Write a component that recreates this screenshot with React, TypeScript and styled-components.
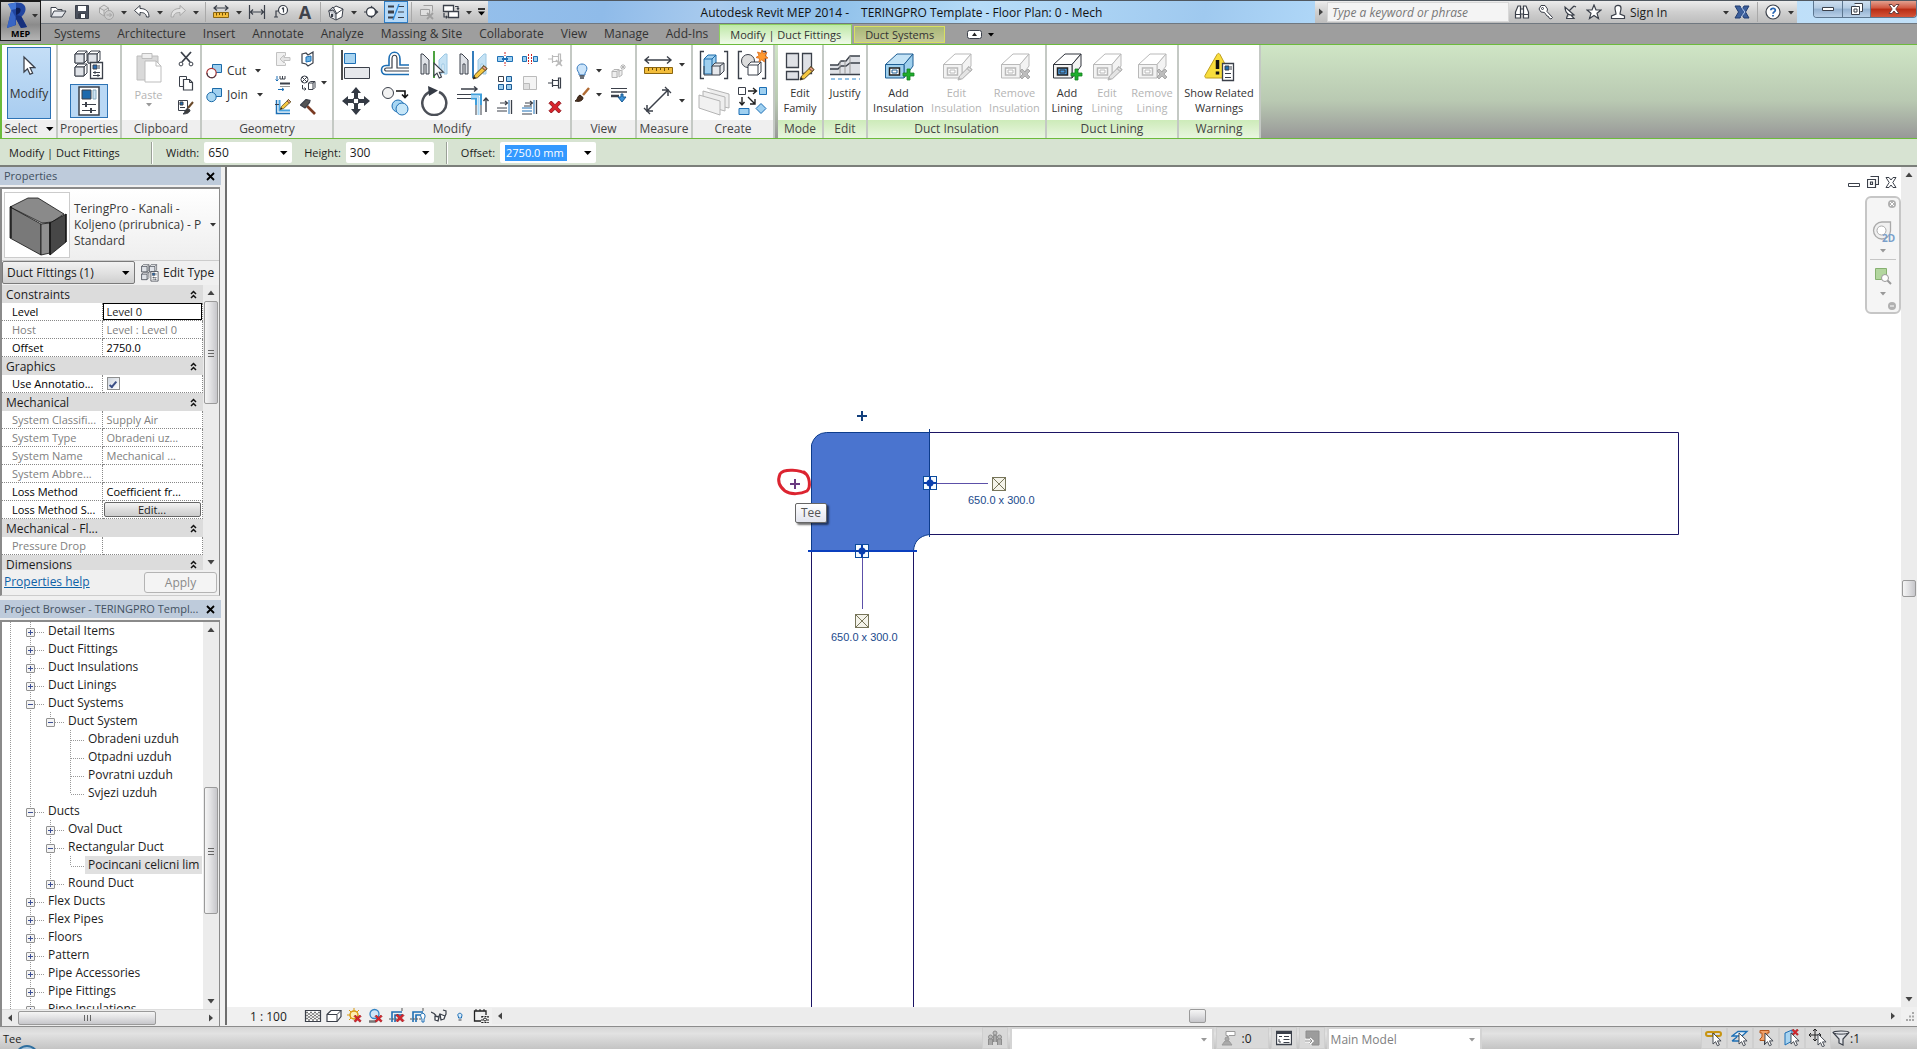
import React from "react";
import styled, { createGlobalStyle, css } from "styled-components";

const INK = "#3b404a";
const BLUE = "#1d6fb5";
const SKY = "#9fd0f0";
const MUTE = "#b9b9b9";

const Global = createGlobalStyle`
  *, *::before, *::after { box-sizing: border-box; }
  body { margin: 0; overflow: hidden; background: #f0f0f0; }
  body, button, input, select { font-family: "Open Sans", "Noto Sans", sans-serif; font-size: 12px; color: #1c1c1c; }
  button, select, input { margin: 0; padding: 0; border: 0; background: none; border-radius: 0; }
  svg { display: block; flex: none; }
`;

/* ---------- icons ---------- */

type IconProps = { w?: number; h?: number; children: React.ReactNode; s?: string };
const Icon = ({ w = 16, h = 16, s = INK, children }: IconProps) => (
  <svg width={w} height={h} viewBox={`0 0 ${w} ${h}`} fill="none" stroke={s} aria-hidden="true">
    {children}
  </svg>
);

const Caret = ({ c = "#333" }: { c?: string }) => (
  <Icon w={8} h={5}><path d="M1 1h6L4 4.500z" fill={c} stroke="none" /></Icon>
);
const BigCaret = () => (
  <Icon w={9} h={6}><path d="M1 1h7.500L4.700 5z" fill="#000" stroke="none" /></Icon>
);
const PointerShape = ({ x, y, k = 1 }: { x: number; y: number; k?: number }) => (
  <path transform={`translate(${x} ${y}) scale(${k})`} d="M0 0v13l3-2.800 2.200 4.800 2.300-1-2.200-4.700H9.500z" fill="#fff" stroke={INK} strokeWidth={1.100} />
);
const PencilShape = ({ x, y, muted }: { x: number; y: number; muted?: boolean }) => (
  <g transform={`translate(${x} ${y})`} stroke={muted ? "#aaa" : "#5a4a20"} strokeWidth="1">
    <path d="M0 14l1.500-4L11 .700l3 3L4.500 12.700z" fill={muted ? "#e4e4e4" : "#f5c63f"} />
    <path d="M9 2.500l3 3L14 3.700l-3-3z" fill={muted ? "#ddd" : "#e59a86"} />
    <path d="M0 14l1-3 2 2z" fill={muted ? "#bbb" : "#222"} stroke="none" />
  </g>
);
const PlusShape = ({ x, y }: { x: number; y: number }) => (
  <path transform={`translate(${x} ${y})`} d="M4 0h3v4h4v3H7v4H4V7H0V4h4z" fill="#1fae2c" stroke="#158020" strokeWidth=".8" />
);
const CrossShape = ({ x, y }: { x: number; y: number }) => (
  <path transform={`translate(${x} ${y})`} d="M2 0l3 3 3-3 2 2-3 3 3 3-2 2-3-3-3 3-2-2 3-3-3-3z" fill="#bdbdbd" stroke="#9d9d9d" strokeWidth=".8" />
);
const RedCross = ({ x, y, k = 1 }: { x: number; y: number; k?: number }) => (
  <path transform={`translate(${x} ${y}) scale(${k})`} d="M1.500 0L4 2.500 6.500 0 8 1.500 5.500 4 8 6.500 6.500 8 4 5.500 1.500 8 0 6.500 2.500 4 0 1.500z" fill="#d8242c" stroke="#8c1016" strokeWidth=".6" />
);

const OpenIcon = () => (
  <Icon w={18} h={16}><path d="M2 13V3.500h5l1.500 2H13V7" fill="#fff" /><path d="M2 13L5 7h12l-4 6z" fill="#e4e6ea" /></Icon>
);
const SaveIcon = () => (
  <Icon><path d="M1.500 1.500h13v13h-13z" fill="#4a505c" /><path d="M4 2h8v5H4z" fill="#fff" stroke="none" /><path d="M4.500 9.500h7v5h-7z" fill="#fff" /><path d="M6 10v4" strokeWidth="2" /></Icon>
);
const SyncIcon = () => (
  <Icon s="#a4a4a4"><path d="M1.500 4L6 1l4.500 3v5L6 12 1.500 9zM1.500 4L6 6.500 10.500 4M6 6.500V12" fill="#ddd" /><circle cx="11" cy="11" r="4.500" fill="#ccc" /><path d="M8.500 11h5M11.500 9l2 2-2 2" /></Icon>
);
const UndoIcon = ({ muted }: { muted?: boolean }) => (
  <Icon w={18} s={muted ? "#a9a9a9" : INK}>
    <path transform={muted ? "matrix(-1 0 0 1 18 0)" : undefined} d="M1.500 6.500L7 1.500v3c6 0 9 3 9 8.500h-2.500C13 9.500 11 8.500 7 8.500v3z" fill={muted ? "#e2e2e2" : "#fff"} />
  </Icon>
);
const RulerIcon = ({ w = 16 }: { w?: number }) => (
  <Icon w={w} h={w > 20 ? 20 : 14}>
    {w > 20 ? (
      <><path d="M2 5h26M6 1.500L2 5l4 3.500M24 1.500L28 5l-4 3.500" strokeWidth="1.400" /><path d="M1.500 12.500h28v6h-28z" fill="#f3bd3b" stroke="#8a6510" /><path d="M5.500 13v3M9.500 13v2M13.500 13v3M17.500 13v2M21.500 13v3M25.500 13v2" stroke="#6b4d08" /></>
    ) : (
      <><path d="M1 3h14M4 .500L1 3l3 2.500M12 .500L15 3l-3 2.500" strokeWidth="1.200" /><path d="M.500 7.500h15v5H.500z" fill="#f3bd3b" stroke="#8a6510" /><path d="M3.500 8v2.500M6.500 8v2M9.500 8v2.500M12.500 8v2" stroke="#6b4d08" /></>
    )}
  </Icon>
);
const DimIcon = () => (
  <Icon w={18} h={14}><path d="M1.500 0v14M16.500 0v14M2 7h14M5 4.500L2.500 7 5 9.500M13 4.500L15.500 7 13 9.500" strokeWidth="1.200" /></Icon>
);
const TagIcon = () => (
  <Icon w={18}><circle cx="11" cy="6" r="4.500" fill="#fff" strokeWidth="1.200" /><path d="M6.500 7H4v6M2 13h4M11.500 3.500v5M10 5l1.500-1.500" strokeWidth="1.200" /></Icon>
);
const HouseIcon = () => (
  <Icon w={18} h={18}><path d="M2 8l7-5 7 3-1 8-6 3-6-3z" fill="#fff" /><path d="M2 8l4-1 3 4v6M9 11l7-5M1 8.500L6 4l4 7" fill="#c9ccd2" /><path d="M5 11v3" strokeWidth="2" /></Icon>
);
const SectionIcon = () => (
  <Icon><path d="M7 1.500l7.500 6.500L7 14.500z" fill={INK} stroke="none" /><circle cx="7" cy="8" r="4.500" fill="#fff" strokeWidth="1.300" /><path d="M0 8h2" /></Icon>
);
const ThinLinesIcon = () => (
  <Icon w={18} h={16}><path d="M1 2.500h6M1 13.500h6" strokeWidth="2" /><path d="M1 8h6" strokeWidth="3" /><path d="M11 2.500h6M11 8h6M11 13.500h6" /><path d="M12 0L6 16" stroke="#2a8be0" strokeWidth="1.300" /></Icon>
);
const CloseHiddenIcon = () => (
  <Icon s="#9f9f9f"><path d="M4.500 1.500h9v6M1.500 5.500h9v6h-9z" fill="#e0e0e0" /><path d="M8 9l6 6M14 9l-6 6" strokeWidth="1.800" /></Icon>
);
const SwitchIcon = () => (
  <Icon w={18}><path d="M1.500 1.500h10v6h-10zM6.500 7.500h10v6h-10z" fill="#fff" strokeWidth="1.300" /><path d="M13 2.500h3v3M15 4l1 1.500L17 4M2 9v4h3M4 12l1.200 1L4 14.500" strokeWidth="1.200" /></Icon>
);
const CustomizeIcon = () => (
  <Icon w={9} h={8}><path d="M1 1h7" stroke="#000" strokeWidth="1.500" /><path d="M1 3.500h7L4.500 7.500z" fill="#000" stroke="none" /></Icon>
);
const BinocularsIcon = () => (
  <Icon><path d="M1.500 14V8L4 2h2.500v12zM14.500 14V8L12 2H9.500v12zM6.500 5h3v5h-3zM1.500 10.500h5M9.500 10.500h5" fill="#fff" strokeWidth="1.200" /></Icon>
);
const KeyIcon = () => (
  <Icon><path d="M3 1.500h4L9.500 5 9 7.500l5.500 6-1.500 1.500-2-1-.500-1.500L9 12l-2.500-3.500L3 8 1 5z" fill="#fff" /><circle cx="4.500" cy="4.500" r="1" /></Icon>
);
const DishIcon = () => (
  <Icon><path d="M3 3c0 6 4 9 9 8zM7 7l5-5M12 2l2 1M4 14.500h8L9 11M6 10l-1.500 4" fill="#fff" strokeWidth="1.200" /></Icon>
);
const StarIcon = () => (
  <Icon><path d="M8 1l2 5h5l-4 3.300 1.500 5.200L8 11.500l-4.500 3L5 9.300 1 6h5z" fill="#fff" strokeWidth="1.200" /></Icon>
);
const PersonIcon = () => (
  <Icon><path d="M5 4c0-3.500 6-3.500 6 0 0 3-1 4-1 6l4.500 2v2.500h-13V12L6 10c0-2-1-3-1-6z" fill="#fff" strokeWidth="1.200" /></Icon>
);
const ExchangeIcon = () => (
  <Icon><path d="M1 2h5l2 3.500L10 2h5l-3.500 6 3.500 6h-5l-2-3.500L6 14H1l3.500-6z" fill="#3c5f9c" stroke="#203c70" /><path d="M7 3l4 5-4 5" stroke="#b5cdf0" /></Icon>
);
const HelpIcon = () => (
  <Icon><circle cx="8" cy="8" r="7" fill="#fff" strokeWidth="1.200" /><path d="M5.800 6.200C6 3.600 10.500 3.800 10.300 6.300 10.200 7.900 8 8 8 9.800M8 11v1.600" stroke="#2866b4" strokeWidth="1.800" /></Icon>
);
const LogoIcon = () => (
  <Icon w={24} h={27}>
    <path d="M3 2l8-1.500c7-.500 10 3 9.500 7.500-.500 3-2 5-4 6.500L22 25l-6 1-5-9v6l-9 3L6.500 7z" fill="#2145a0" stroke="none" />
    <path d="M3 2l8-1.500V7l-5 1z" fill="#4275d6" stroke="none" /><path d="M11 6c4-1 5 1 4.500 3S13 12.500 11 13z" fill="#0d1d55" stroke="none" />
    <path d="M11 13l5 1 6 11-6 1-5-9z" fill="#16307c" stroke="none" /><path d="M2 26L6.500 8l4 7v8z" fill="#3865c4" stroke="none" />
  </Icon>
);

/* ribbon, large */
const CursorIcon = () => (<Icon w={14} h={20}><PointerShape x={2} y={2} k={1.150} /></Icon>);
const CubesGroup = ({ k = 1 }: { k?: number }) => (
  <Icon w={30 * k} h={30 * k}>
    <g transform={`scale(${k})`}>
      {[[1, 1], [14, 1], [1, 14]].map(([x, y]) => (
        <g key={`${x}-${y}`} transform={`translate(${x} ${y})`}><path d="M0 3l3-3h9v9l-3 3H0z" fill="#fff" /><path d="M0 3h9v9M9 3l3-3" /><path d="M0 3h9v9H0z" fill="#e0e3e8" /></g>
      ))}
      <path d="M16.500 12.500h12v16h-12z" fill="#fff" strokeWidth="1.300" /><path d="M19 15h4v4h-4z" fill="#2a6fb8" /><path d="M25 15v4M19 22.500h7M19 25.500h7" /><path d="M21 21v3M24 24v3" />
    </g>
  </Icon>
);
const SheetIcon = () => (
  <Icon w={22} h={30}><path d="M1 1h20v28H1z" fill="#fff" strokeWidth="1.500" /><path d="M4 4h9v9H4z" fill="#1d6aad" /><path d="M15 4h3v9h-3z" fill="#cfe4f5" stroke="#8ab" /><path d="M4 18.500h14M4 24.500h14" /><path d="M8 16v5M13 22v5" strokeWidth="2" /></Icon>
);
const PasteIcon = () => (
  <Icon w={28} h={32} s="#bdbdbd"><path d="M2 4h21v24H2z" fill="#d9d9d9" /><path d="M7 1.500h10v5H7z" fill="#eee" /><path d="M10 9h11l5 5v16H10z" fill="#fff" /><path d="M21 9v5h5" /></Icon>
);
const ScissorsIcon = () => (
  <Icon><path d="M3 1l9 10M13 1L4 11" strokeWidth="1.800" /><circle cx="3" cy="13" r="1.900" /><circle cx="13" cy="13" r="1.900" /></Icon>
);
const CopyIcon = () => (
  <Icon><path d="M1.500 1.500h7v10h-7z" fill="#fff" /><path d="M5.500 4.500h6l3 3v7.500h-9z" fill="#fff" strokeWidth="1.200" /><path d="M11.500 4.500v3h3" /></Icon>
);
const MatchIcon = () => (
  <Icon><path d="M.500 1.500h9v10h-9z" fill="#fff" /><path d="M2 3h3v3H2z" fill={BLUE} /><path d="M2 8.500h5" /><path d="M15 3l-5 6" stroke="#6a4a2a" strokeWidth="2" /><path d="M5 15c2-1 2-5 4.500-5.500L12 11c0 3-4 4-7 4z" fill="#3c3c3c" /></Icon>
);
const CutIcon = () => (
  <Icon><path d="M6.500 1.500h9v8h-9z" fill={SKY} stroke="#1b6aa8" /><circle cx="5.500" cy="10" r="4.700" fill="#fff" stroke="#a33" strokeWidth="1.200" /><path d="M1 10a4.700 4.700 0 009 2" stroke={INK} /></Icon>
);
const JoinIcon = () => (
  <Icon><path d="M6.500 1.500h9v8h-9z" fill={SKY} stroke="#1b6aa8" /><circle cx="5.500" cy="10" r="4.700" fill="#a9d7f2" stroke="#1b6aa8" /></Icon>
);
const CopeIcon = () => (<Icon s="#c2c2c2"><path d="M1.500 1.500h9v3l-4 4 4 4v2h-9z" fill="#f0f0f0" /><path d="M5 8l4-4v2.500h6v3H9V12z" fill="#e4e4e4" /></Icon>);
const WallJoinIcon = () => (
  <Icon><path d="M2 3l4-1 2 2 5-3v11l-5 3-2-2-4-1z" fill="#fff" strokeWidth="1.200" /><path d="M6 6l5-1v5l-5 1z" fill="#6bb5e6" stroke={BLUE} /></Icon>
);
const SplitFaceIcon = () => (
  <Icon><path d="M2 1v5M.500 4.500L2 6l1.500-1.500" stroke={BLUE} /><path d="M5 1v3h2.500V1M7.500 4H10V1" /><path d="M5 8.500h10" strokeWidth="2" /><path d="M5 11.500h10" stroke="#999" /><path d="M3 14.500h6M7 13l2 1.500L7 16" stroke={BLUE} /></Icon>
);
const DemolishPaintIcon = () => (
  <Icon><circle cx="4.500" cy="4.500" r="3.500" fill="#fff" /><path d="M2 2l5 5M7 2L2 7M2.500 10v4h3M4.500 12.500L6 14l-1.500 1.500" /><path d="M8.500 8l2-1.500H15v6L13 14.500H8.500z" fill="#fff" /><path d="M8.500 8H13v6M13 8l2-1.500" /></Icon>
);
const BeamIcon = () => (
  <Icon><path d="M1.500 1v13.500H15" stroke={BLUE} strokeWidth="1.500" /><path d="M4.500 1v10.500H15" stroke="#4aa3e0" strokeWidth="2" /><path d="M0 5.500h4" /><g transform="scale(.75)"><PencilShape x={7} y={0} /></g></Icon>
);
const HammerIcon = () => (
  <Icon><path d="M7 7l8 8" stroke="#7a3a22" strokeWidth="2.600" /><path d="M.500 6L6 .500l4 1-.500 2L5 9z" fill="#555" strokeWidth="1.200" /></Icon>
);
const AlignIcon = () => (
  <Icon w={30} h={30}><path d="M1 0v30" stroke="#111" strokeWidth="1.500" /><path d="M3.500 3.500h11v10h-11z" fill="#a9d4f0" stroke={BLUE} /><path d="M3.500 17.500h25v11h-25z" fill="#e6e8ec" /></Icon>
);
const OffsetIcon = () => (
  <Icon w={30} h={30}><path d="M29 24.500H6c-6 0-6-9 0-9h3V9c0-9 11-9 11 0v6h9" stroke={BLUE} strokeWidth="1.600" /><path d="M29 21H6.500c-2.500 0-2.500-3 0-3H12V9c0-5 5-5 5 0v9h12" strokeWidth="1.200" /></Icon>
);
const MirrorIcon = ({ pencil }: { pencil?: boolean }) => (
  <Icon w={30} h={30}>
    <path d="M2 4h2l6 6v14H7V14H5v10H2z" fill="#dfe2e7" /><path d="M28 4h-2l-6 6v14h3V14h2v10h3z" fill="#c5e2f4" stroke="#9cc8e4" />
    <path d="M15 1v27" stroke={pencil ? BLUE : "#3a9a2c"} strokeWidth="1.800" />
    {pencil ? <PencilShape x={15} y={15} /> : <PointerShape x={15} y={13} />}
  </Icon>
);
const MoveIcon = () => (
  <Icon w={30} h={30}><path d="M15 1l5 6h-3v5h-4V7h-3zM15 29l5-6h-3v-5h-4v5h-3zM1 15l6-5v3h5v4H7v3zM29 15l-6-5v3h-5v4h5v3z" fill="#343a44" stroke="none" /><path d="M12.500 12.500h5v5h-5z" fill="#fff" /></Icon>
);
const CopyBigIcon = () => (
  <Icon w={30} h={30}><circle cx="8" cy="7" r="5.500" fill="#f2f2f2" /><circle cx="18" cy="20" r="6" fill="#a8d6f2" stroke={BLUE} /><circle cx="22" cy="23" r="6" fill="#c6e6f8" stroke={BLUE} /><path d="M16 5h9v6M22 8.500l3 3 3-3" stroke="#111" strokeWidth="1.600" /></Icon>
);
const RotateIcon = () => (
  <Icon w={30} h={30}><path d="M20 6a12 12 0 11-8-.500" stroke="#4b4f57" strokeWidth="2.500" /><path d="M9 0l10 4.500L10 10z" fill="#343a44" stroke="none" /></Icon>
);
const TrimIcon = () => (
  <Icon w={32} h={30}><path d="M4 3h16M17 .500L20 3l-3 2.500" strokeWidth="1.400" /><path d="M0 8.500h14M0 12.500h14M19 18v11M24 18v11" /><path d="M14 8.500h10V19M14 12.500h5V19" stroke="#3f9fdc" strokeWidth="2" /><path d="M21.500 11v18M14 10.500h8" stroke="#a9d8f6" strokeWidth="2" /><path d="M29 26V12M26.500 15L29 12l2.500 3" strokeWidth="1.400" /></Icon>
);
const SplitIcon = ({ gap }: { gap?: boolean }) => (
  <Icon>
    {gap ? (
      <><path d="M.500 5.500h4v5h-4zM11.500 5.500h4v5h-4z" fill={SKY} stroke={BLUE} /><path d="M6.500 3v10M9.500 3v10" stroke="#c22" strokeDasharray="2 1" /></>
    ) : (
      <><path d="M.500 5.500h6v5h-6zM9.500 5.500h6v5h-6z" fill={SKY} stroke={BLUE} /><path d="M5 8h6" stroke={BLUE} strokeWidth="2" /><path d="M8 1v4M8 11v4" stroke="#c22" strokeDasharray="2 1" /></>
    )}
  </Icon>
);
const UnpinIcon = ({ muted }: { muted?: boolean }) => (
  <Icon s={muted ? "#bbb" : INK}><path d="M1 8h4M5.500 4v8M5.500 5.500h6v5h-6M11.500 3v10h2V3z" strokeWidth="1.200" fill="#fff" />{muted && <path d="M9 9l6 6M15 9l-6 6" strokeWidth="1.600" />}</Icon>
);
const ArrayIcon = () => (
  <Icon><path d="M1.500 1.500h5v5h-5z" fill="#fff" /><path d="M9.500 1.500h5v5h-5zM1.500 9.500h5v5h-5zM9.500 9.500h5v5h-5z" fill={SKY} stroke="#1b5a94" /></Icon>
);
const ScaleIcon = () => (<Icon s="#bbb"><path d="M1.500 1.500h13v13h-13z" fill="#f4f4f4" /><path d="M1.500 8.500h6v6h-6z" fill="#e0e0e0" /></Icon>);
const ExtendIcon = ({ multi }: { multi?: boolean }) => (
  <Icon><path d="M3 4h7M8 2l2.500 2L8 6" strokeWidth="1.200" /><path d="M0 9h10M0 12h10" stroke={multi ? BLUE : INK} />{multi && <path d="M0 15h10M2 7h8" />}<path d="M12 1v14" stroke={BLUE} /><path d="M14.500 1v14" strokeWidth="1.300" /></Icon>
);
const DeleteIcon = () => (<Icon><RedCross x={2} y={2} k={1.500} /></Icon>);
const BulbIcon = () => (
  <Icon><path d="M5 10C1 5 4 1 8 1s7 4 3 9v2H5z" fill="#cbe4fa" stroke="#3579bd" /><path d="M5.500 13h5M6 15h4" strokeWidth="1.500" /></Icon>
);
const BrushIcon = () => (
  <Icon><path d="M15 1L9 8" stroke="#b06a32" strokeWidth="2.500" /><path d="M1 14c3-1 2-5 5-6l3 2.500C9 14 5 15 1 14z" fill="#4a3020" stroke="#2d1c10" /></Icon>
);
const RevealIcon = () => (
  <Icon s="#b4b4b4"><path d="M1 8.500l2-2h5v6l-2 2H1zM1 8.500h5v6M6 8.500l2-2M8 8l3-1v5l-3 2" fill="#eee" /><path d="M12 1v6M9 4h6M10 2l4 4M14 2l-4 4" /></Icon>
);
const LineworkIcon = () => (
  <Icon><path d="M0 1.500h16" /><path d="M0 5h16" strokeWidth="1.500" /><path d="M0 9h8" strokeWidth="2.500" /><path d="M12 7v3h3l-4 5-4-5h3V7z" fill="#3c93d8" stroke="#175a94" /></Icon>
);
const DiagonalIcon = () => (
  <Icon w={30} h={30}><path d="M4 25L25 4M4 19v6h6M19 4h6v6" strokeWidth="1.500" /><path d="M1 22l6 6M22 1l6 6" strokeWidth="1.300" /></Icon>
);
const AssemblyIcon = ({ star }: { star?: boolean }) => (
  <Icon w={32} h={30}>
    <path d="M6 1.500H2.500v27H6M26 1.500h3.500v27H26" strokeWidth="1.400" />
    {star ? (
      <><circle cx="12" cy="11" r="6.500" fill="#ddd" /><path d="M12 15l3-3h10v10l-3 3H12z" fill="#fff" /><path d="M12 15h10v10M22 15l3-3" /><path d="M26 0l1.300 3.500L31 2.500l-1.800 3.200L32 8l-3.800.600.200 3.400-2.600-2.200L23 12l.600-3.600L20 7.500l3-2L21.500 2l3.500 1.300z" fill="#ff9a2e" stroke="#d8691a" strokeWidth=".8" /></>
    ) : (
      <><path d="M6 9l4-4h8v8l-4 3v8H6z" fill="#9fd0f0" stroke="#1b6aa8" /><path d="M6 9h8v8M14 9l4-4" stroke="#1b6aa8" /><path d="M14 16l3-3h9v8l-4 4h-8z" fill="#e6e8ec" /><path d="M14 16h8v9M22 16l4-3M6 16v9h8" /></>
    )}
  </Icon>
);
const PartsIcon = () => (
  <Icon w={32} h={30} s="#b4b4b4"><path d="M9 2l22 6v14l-5-1" fill="#eee" /><path d="M5 5l22 6v14L5 19z" fill="#eee" /><path d="M1 9l21 6v14L1 22z" fill="#f1f1f1" /></Icon>
);
const GroupIcon = () => (
  <Icon w={32} h={30}><path d="M2.500 1.500h7v7h-7z" fill="#fff" /><path d="M23.500 1.500h7v7h-7z" fill={SKY} stroke={BLUE} /><path d="M3 22.500h10v6H3z" fill={SKY} stroke={BLUE} /><path d="M25 17.500l5 5-5 5-5-5z" fill={SKY} stroke={BLUE} /><path d="M12 5h8M17 2l3.500 3L17 8M6 11v8M3.500 16L6 19l2.500-3M12 11l7 7M19 13v5h-5" stroke="#222" strokeWidth="1.400" /></Icon>
);
const FamilyIcon = () => (
  <Icon w={32} h={30}><path d="M2.500 1.500h12v14h-12zM18.500 1.500h9v20h-9zM2.500 19.500h12v8h-12z" fill="#dfe1e6" strokeWidth="1.300" /><PencilShape x={16} y={14} /></Icon>
);
const JustifyIcon = () => (
  <Icon w={32} h={30}><path d="M1 22.500V13h7l3-4h5l4-5h11v18.500z" fill="#dfe1e6" stroke="none" /><path d="M1 13h8l3-4h5l4-5h10M1 17h8l3-3h5l4-3h10M1 22.500h30" strokeWidth="1.300" /><path d="M11 9v13M16 8v14M21 4v18" stroke="#999" /><path d="M2 27h29" stroke="#2f86cc" strokeDasharray="4 3" /></Icon>
);
type Mark = "add" | "edit" | "remove";
const DuctIcon = ({ mark, lining }: { mark: Mark; lining?: boolean }) => {
  const on = mark === "add";
  const line = on ? (lining ? "#30343c" : "#1f5f94") : MUTE;
  const face = on && !lining ? "#9fd0ee" : "#f3f3f3";
  return (
    <Icon w={32} h={30} s={line}>
      <path d="M2.500 12.500L14 2h16l-9 10.500z" fill={on && !lining ? "#c4e3f6" : "#fff"} />
      <path d="M21 12.500L30 2v12l-9 12z" fill={face} />
      <path d="M2.500 12.500H21V26H2.500z" fill={face} />
      <path d="M6.500 16h10v7h-10z" fill={on ? (lining ? "#4b9be0" : "#fff") : "#fff"} stroke={on ? "#222" : MUTE} strokeWidth="1.500" />
      <path d="M9 18h5v3H9z" />
      {mark === "add" && <PlusShape x={20} y={17} />}
      {mark === "edit" && <PencilShape x={17} y={14} muted />}
      {mark === "remove" && <CrossShape x={21} y={17} />}
    </Icon>
  );
};
const WarningIcon = () => (
  <Icon w={32} h={30}><path d="M14 2.500c1-1.500 2-1.500 3 0l11 21c.500 1.500 0 2.500-1 2.500H3.500c-1.500 0-2-1-1.500-2.500z" fill="#f8dd3c" stroke="#c0a020" /><path d="M14.500 8v9M14.500 19.500v3" stroke="#111" strokeWidth="3.500" /><path d="M19.500 11.500h11v17h-11z" fill="#fff" strokeWidth="1.300" /><path d="M22 14h4v4h-4z" fill={BLUE} /><path d="M28 14v4M22 21.500h6M22 25.500h6" /></Icon>
);

/* view control and status bar */
const DetailIcon = () => (
  <Icon w={18} h={14}>
    <path d="M1.500 1.500h15v11h-15z" fill="#fff" strokeWidth="1.200" />
    <path d="M2 3.500h14M2 6.500h14M2 9.500h14" stroke="#777" strokeDasharray="2 2" strokeWidth="1.500" /><path d="M4 5h12M4 8h12M4 11h12" stroke="#777" strokeDasharray="2 2" strokeWidth="1.500" />
  </Icon>
);
const StyleIcon = () => (<Icon w={16} h={14}><path d="M1 5.500l4-4h10v6l-4 5H1z" fill="#fff" strokeWidth="1.200" /><path d="M1 5.500h10v7M11 5.500l4-4" /></Icon>);
const SunIcon = () => (<Icon><path d="M7 0v3M2 2l2 2M0 7h3M2 12l2-2M12 2l-2 2" stroke="#d99a12" /><circle cx="7" cy="7" r="4" fill="#fdeeb0" stroke="#d99a12" strokeWidth="1.500" /><RedCross x={7} y={7} k={0.900} /></Icon>);
const ShadowIcon = () => (<Icon><circle cx="6.500" cy="6" r="4.500" fill="#cfe6f8" stroke="#3383c4" strokeWidth="1.300" /><path d="M1 13.500h7" strokeWidth="2.500" stroke="#777" /><RedCross x={7} y={7} k={0.900} /></Icon>);
const CropIcon = ({ bulb }: { bulb?: boolean }) => (
  <Icon><path d="M3 14V4h10M6 14V7h7" stroke={BLUE} strokeWidth="1.600" /><path d="M0 11h12" stroke="#555" strokeDasharray="2 1" /><path d="M13 0v3" stroke="#555" />{bulb ? <path d="M11 9c-2-5 5-5 4 0l-1 2v3h-2v-3z" fill="#fff" stroke={BLUE} /> : <RedCross x={7} y={6} k={1} />}</Icon>
);
const GlassesIcon = () => (<Icon><path d="M0 4l3 1.500 2 2M7.500 9L9 6M12 2l3 1v3l-1 2" strokeWidth="1.200" /><path d="M4 8l4 1-1 4-3-1zM9 6l5 2-1 3-3 1z" fill="#fff" strokeWidth="1.300" strokeLinejoin="round" /></Icon>);
const SmallBulbIcon = () => (<Icon w={8} h={12}><path d="M2.500 7C-.500 2 8 2 5.500 7v1h-3z" fill="#d7eafa" stroke={BLUE} /><path d="M2.500 10h3" /></Icon>);
const ConstraintsIcon = () => (<Icon><path d="M13 7V3H1.500v10H8" strokeWidth="1.300" stroke="#222" /><path d="M3 1v2M7 1v2M11 1v2" stroke="#222" /><path d="M9 8v7M15 8v7M8.500 8.500h7M8.500 14.500h7" stroke="#222" strokeDasharray="2 1" /><circle cx="12" cy="11.500" r="1.500" stroke="#222" /></Icon>);
const PeopleIcon = () => (
  <Icon s="#8c8c8c"><circle cx="8" cy="3" r="2" fill="#bbb" /><circle cx="3.500" cy="7" r="2" fill="#bbb" /><circle cx="12.500" cy="7" r="2" fill="#bbb" /><path d="M1.500 15v-6h4v6M10.500 15v-6h4v6M6.500 12V5.500h3V12" fill="#a9a9a9" /></Icon>
);
const RequestIcon = () => (<Icon s="#9a9a9a"><path d="M5 1.500h9v4H8l-1.500 2V5.500H5z" fill="#fff" /><circle cx="6" cy="9" r="2" fill="#aaa" /><path d="M1 15l3-4h4l3 4z" fill="#aaa" /></Icon>);
const OptionsIcon = () => (<Icon><path d="M.500 1.500h15v13H.500z" fill="#fff" strokeWidth="1.300" /><path d="M.500 3h15" strokeWidth="2" /><path d="M3 6.500h3M3 9v3h2M7.500 9.500h6M7.500 12.500h6M8 6.500h5" /></Icon>);
const AddSetIcon = () => (<Icon s="#8e8e8e"><path d="M2 1h13v14H8V8H2z" fill="#9c9c9c" /><path d="M1 11h7M5.500 8.500L8 11l-2.500 2.500" stroke="#fff" strokeWidth="3" /><path d="M1 11h7M5.500 8.500L8 11l-2.500 2.500" /></Icon>);
const PickIcon = ({ kind }: { kind: "link" | "underlay" | "pin" | "face" | "drag" }) => (
  <Icon w={18} h={18}>
    {kind === "link" && <g stroke="#c79410" strokeWidth="2"><rect x="1" y="3" width="8" height="4" rx="2" /><rect x="8" y="3" width="8" height="4" rx="2" /></g>}
    {kind === "underlay" && <path d="M1 7l6-4.500h9l-5 4.500zM1 12l5-4M1 12h8" fill="#eaf4fc" stroke={BLUE} strokeWidth="1.300" />}
    {kind === "pin" && <g stroke="#b3561c"><path d="M3 1.500h9v2.500h-2v4l2 2v1.500H3V10l2-2V4H3z" fill="#f2a26a" /><path d="M7.500 12v4" stroke={INK} /></g>}
    {kind === "face" && <><path d="M2 4l7-3v11l-7 4z" fill="#a9d4f0" stroke={BLUE} /><RedCross x={9} y={0} k={0.800} /></>}
    {kind === "drag" && <path d="M6 0v12M0 6h12M4 2l2-2 2 2M4 10l2 2 2-2M2 4L0 6l2 2M10 4l2 2-2 2" stroke="#222" />}
    <PointerShape x={kind === "drag" ? 9 : 8} y={kind === "drag" ? 5 : 4} k={0.850} />
  </Icon>
);
const FunnelIcon = () => (<Icon w={18} h={16}><path d="M1 2.500C1 .500 17 .500 17 2.500L11 9v6l-4-2V9z" fill="#e3e5e9" strokeWidth="1.200" /><path d="M1.500 3c3 1.500 12 1.500 15 0" /></Icon>);
const ChevronsIcon = () => (<Icon w={7} h={9} s="#111"><path d="M1 4l2.500-2.500L6 4M1 8l2.500-2.500L6 8" strokeWidth="1.500" /></Icon>);
const CrossIcon = () => (<Icon w={9} h={9} s="#000"><path d="M1 1l7 7M8 1L1 8" strokeWidth="1.800" /></Icon>);
const ElbowThumb = () => (
  <Icon w={62} h={62} s="#111">
    <path d="M4 13L22 4h10l26 16-12 8-10 1z" fill="#8a8a8a" strokeWidth=".8" />
    <path d="M4 13l31 17v31L4 44z" fill="#797979" strokeWidth=".8" /><path d="M35 30l9-1v30l-9 2z" fill="#8f8f8f" strokeWidth=".8" />
    <path d="M44 29l16-9v28L44 61z" fill="#474747" strokeWidth=".8" /><path d="M44 28v33M5 12v32M60 20v28" strokeWidth="1.300" />
  </Icon>
);

/* ---------- shell ---------- */

const Shell = styled.div`display: flex; flex-direction: column; height: 100vh; overflow: hidden;`;
const Header = styled.header`
  display: grid; grid-template-columns: 41px 1fr; grid-template-rows: 24px 20px;
  background: #9e9e9e; border-bottom: 1px solid #6cbb3c;
`;
const AppMenu = styled.button`
  grid-row: 1 / 3; align-self: start; height: 41px; display: flex; flex-direction: column; align-items: center;
  border: 1px solid #1a1a1a; border-top-width: 2px; background: linear-gradient(#c9c9c9, #8b8b8b 60%, #b4b4b4);
  font-size: 9px; font-weight: 700; line-height: 10px; color: #000;
  > span { display: flex; align-items: center; gap: 2px; padding-left: 3px; }
`;
const TitleBar = styled.div`
  display: flex; border-bottom: 1px solid #707880; border-top: 1px solid #505860;
  background: linear-gradient(100deg, #a5cdf2 0, #8fbbe9 30%, #a9cbee 36%, #8fc0ea 42%, #b6dcf8 50%, #9fc9ef 62%, #b4dbfa 70%, #c1e0f8 100%);
`;
const QuickBar = styled.div`
  display: flex; align-items: center; padding: 0 1px 0 5px;
  background: linear-gradient(#ececec, #cfcfcf 50%, #bdbdbd);
`;
const QButton = styled.button<{ $arrow?: boolean; $on?: boolean }>`
  display: flex; align-items: center; justify-content: center; height: 22px;
  width: ${(p) => (p.$arrow ? 12 : 24)}px; font-size: 18px; font-weight: 700; color: #3f434b;
  ${(p) => p.$on && css`background: #b5d9f8; border: 1px solid #2f7dc4;`}
`;
const QSep = styled.span`width: 1px; height: 20px; margin: 0 3px; background: #a9a9a9;`;
const WindowTitle = styled.h1`
  flex: 1; display: flex; justify-content: center; align-items: center; gap: 12px; margin: 0;
  font-size: 12px; font-weight: 400; color: #111; white-space: nowrap;
`;
const InfoCenter = styled.div`
  display: flex; align-items: center; width: 482px; background: linear-gradient(#ececec, #cfcfcf 50%, #bdbdbd);
`;
const Search = styled.input`
  width: 182px; height: 20px; margin-right: 1px; padding: 0 4px; background: #f4f4f4; border: 1px solid #d8d8d8; font-size: 12px; font-style: italic;
  &::placeholder { color: #777; opacity: 1; }
`;
const SignIn = styled.button`display: flex; align-items: center; gap: 4px; flex: 1; padding-left: 4px; font-size: 12px; > :last-child { margin-left: auto; }`;
const WinButtons = styled.div`
  display: flex; align-self: flex-start; height: 17px; margin-left: 16px; border: 1px solid #5d7790; border-top: 0; border-radius: 0 0 4px 4px; overflow: hidden;
`;
const WinButton = styled.button<{ $close?: boolean }>`
  display: grid; place-items: center; width: ${(p) => (p.$close ? 46 : 28)}px;
  background: ${(p) => (p.$close ? "linear-gradient(#e2a08f, #d0553d 45%, #b82c14 50%, #d4553a)" : "linear-gradient(#cfe0f1, #b3cbe2 45%, #93b1d0 50%, #b9d0e8)")};
  & + & { border-left: 1px solid #5d7790; }
`;

const Tabs = styled.nav`display: flex; align-items: flex-end; padding-left: 5px; background: #9e9e9e;`;
const Tab = styled.button<{ $kind?: "active" | "context" }>`
  height: 20px; padding: 0 9px 0 8px; font-size: 12px; line-height: 20px; color: #333; white-space: nowrap;
  ${(p) => p.$kind && css`margin-left: 2px; padding: 0 10px; font-size: 11px;`}
  ${(p) => p.$kind === "active" && css`border: 1px solid #8cd060; border-bottom: 0; background: linear-gradient(#bfe8a8, #effae8);`}
  ${(p) => p.$kind === "context" && css`height: 17px; line-height: 15px; align-self: center; border: 1px solid #d8e060; background: linear-gradient(#a9b878, #c5ca96);`}
`;
const Minimize = styled.button`display: flex; align-items: center; align-self: center; gap: 5px; margin-left: 22px;`;

/* ---------- ribbon ---------- */

const Ribbon = styled.div`
  display: flex; height: 94px; border-bottom: 1px solid #6cbb3c; border-left: 2px solid #6cbb3c;
  background: linear-gradient(#cfe5c5, #b9c9b2 60%, #989898);
`;
const PanelBox = styled.section<{ $w: number; $first?: boolean }>`
  display: flex; flex-direction: column; width: ${(p) => p.$w}px; flex: none; background: #fff; border-right: 2px solid #c4c9c4;
  ${(p) => p.$first && css`margin-left: 3px;`}
`;
const PanelBody = styled.div`flex: 1; display: flex; align-items: center; justify-content: center; min-height: 0;`;
const PanelTitle = styled.h2<{ $green?: boolean }>`
  display: flex; align-items: center; justify-content: center; gap: 7px; height: 18px; margin: 0; font-size: 12px; font-weight: 400; line-height: 16px; color: #444; white-space: nowrap;
  background: ${(p) => (p.$green ? "linear-gradient(#cdebb9, #e9f6e0)" : "#efefef")};
`;
const Tool = styled.button<{ $w?: number; $muted?: boolean }>`
  display: flex; flex-direction: column; align-items: center; align-self: flex-start; width: ${(p) => p.$w ?? 58}px; padding-top: 7px;
  font-size: 11px; line-height: 15px; color: ${(p) => (p.$muted ? "#b4b4b4" : "#333")};
  > svg { margin-bottom: 3px; }
`;
const ModifyTool = styled(Tool)`
  align-self: stretch; margin: 2px 0 1px; padding-top: 7px; background: linear-gradient(#c4def6, #a9cdf0); border: 1px solid #2d73b5; font-size: 12px;
  > svg { margin-bottom: 11px; }
`;
const IconGrid = styled.div<{ $cols: number; $cw: number; $rows?: number }>`
  display: grid; grid-template-columns: repeat(${(p) => p.$cols}, ${(p) => p.$cw}px); grid-auto-rows: ${(p) => 72 / (p.$rows ?? 3)}px; place-items: center;
`;
const Cell = styled.button<{ $on?: boolean }>`
  display: flex; align-items: center; justify-content: center; gap: 5px;
  ${(p) => p.$on && css`width: 38px; height: 34px; background: #b9d8f5; border: 1px solid #2d73b5;`}
`;
const TextTools = styled.div`display: flex; flex-direction: column; gap: 6px; width: 64px;`;
const TextTool = styled.button`display: flex; align-items: center; gap: 5px; height: 18px; font-size: 12px; color: #333; > :last-child { margin-left: 3px; }`;

const OptionsBar = styled.form`
  display: flex; align-items: center; height: 28px; padding: 1px 0 0 9px; background: #d7e3d2; border-bottom: 2px solid #7b7f7a; font-size: 12px;
`;
const ContextName = styled.span`width: 142px; font-size: 11px;`;
const Field = styled.label`display: flex; align-items: center; gap: 5px; margin-right: 12px; font-size: 11px; white-space: nowrap;`;
const Rule = styled.span`width: 2px; height: 22px; margin-right: 13px; background: linear-gradient(90deg, #9aa097 50%, #fff 50%);`;
const SelectFrame = styled.span<{ $w: number; $h?: number; $look?: "raised" | "status" }>`
  display: grid; align-items: center; width: ${(p) => p.$w}px; height: ${(p) => p.$h ?? 21}px; background: #fff; border-radius: 2px;
  > * { grid-area: 1 / 1; }
  > svg { justify-self: end; margin-right: 4px; pointer-events: none; }
  ${(p) => p.$look === "raised" && css`border: 1px solid #7a7a7a; background: linear-gradient(#f2f2f2, #dedede 60%, #cfcfcf);`}
  ${(p) => p.$look === "status" && css`border: 2px solid #d4d4d4; border-bottom: 0; border-radius: 0;`}
`;
const PlainSelect = styled.select`
  appearance: none; width: 100%; height: 100%; padding-left: 4px; font-size: 12px; outline: 0;
  &:disabled { padding-left: 2px; color: #808080; opacity: 1; }
`;
const OffsetInput = styled.input`justify-self: start; width: 62px; height: 16px; margin-left: 5px; padding: 0 1px; background: #3399ff; color: #fff; font-size: 11px; outline: 0;`;

/* ---------- work area ---------- */

const Work = styled.main`flex: 1; display: grid; grid-template-columns: 225px 1fr; min-height: 0;`;
const Dock = styled.aside`display: flex; flex-direction: column; min-height: 0; padding-right: 4px; background: #f0f0f0;`;
const DockHeader = styled.header`
  display: flex; align-items: center; justify-content: space-between; flex: none; height: 18px; padding: 0 6px 0 4px; background: #becbdb; color: #42505f;
  > h2 { margin: 0; font-size: 11px; font-weight: 400; line-height: 16px; white-space: nowrap; }
`;
const DockBody = styled.div`display: flex; flex-direction: column; min-height: 0; margin: 2px 1px 0 0; border: 1px solid #8a8a8a; border-width: 2px 1px 0 2px;`;
const PropsBody = styled(DockBody)`height: 409px; flex: none; margin-bottom: 4px; border-bottom: 1px solid #ccc;`;
const TypeSelector = styled.button`
  display: flex; align-items: center; gap: 4px; height: 72px; flex: none; padding: 3px 2px; text-align: left; font-size: 12px; line-height: 16px; color: #3a3a3a; white-space: nowrap;
  border-bottom: 1px solid #ccc; background: linear-gradient(#fff, #eee);
  > :last-child { margin-left: auto; }
`;
const Thumb = styled.span`display: grid; place-items: center; flex: none; width: 66px; height: 66px; background: #fff; border: 1px solid #ccc;`;
const InstanceRow = styled.div`display: flex; align-items: center; gap: 6px; height: 24px; flex: none; padding-bottom: 1px;`;
const EditType = styled.button`display: flex; align-items: center; gap: 4px; font-size: 12px; color: #222; white-space: nowrap;`;
const GridArea = styled.div`display: flex; flex: 1; min-height: 0; overflow: hidden;`;
const GridClip = styled.div`flex: 1; overflow: hidden; min-width: 0;`;
const PropTable = styled.table`width: 100%; table-layout: fixed; border-spacing: 0; background: #fff; font-size: 11px; line-height: 17px;`;
const GroupCell = styled.th`
  height: 18px; padding: 0 6px 0 4px; background: #dcdcdc; text-align: left; font-weight: 400; font-size: 12px;
  > div { display: flex; align-items: center; justify-content: space-between; height: 18px; }
`;
const NameCell = styled.th<{ $muted?: boolean }>`
  height: 18px; padding: 0 0 0 10px; text-align: left; font-weight: 400; white-space: nowrap; overflow: hidden; color: ${(p) => (p.$muted ? "#808080" : "#000")};
  border-right: 1px dotted #888; border-bottom: 1px dotted #888;
`;
const ValueCell = styled.td<{ $muted?: boolean }>`
  height: 18px; padding: 0 0 0 4px; white-space: nowrap; overflow: hidden; color: ${(p) => (p.$muted ? "#808080" : "#000")};
  border-right: 1px dotted #888; border-bottom: 1px dotted #888;
  &:has(> input[type="text"]), &:has(> button) { padding: 0; }
`;
const LevelInput = styled.input`display: block; width: 100%; height: 17px; padding: 0 3px; border: 1px solid #000; background: #fff; font-size: 11px;`;
const EditButton = styled.button`display: block; width: 97px; height: 15px; margin: 1px; line-height: 12px; border: 1px solid #666; border-radius: 2px; background: linear-gradient(#f4f4f4, #dcdcdc 55%, #cdcdcd); font-size: 11px;`;
const Check = styled.input`
  appearance: none; display: grid; place-items: center; width: 13px; height: 13px; border: 1px solid #8e8f8f; background: linear-gradient(135deg, #cfd6df, #fff);
  &:checked::after { content: ""; width: 4px; height: 8px; border: solid #3b4f86; border-width: 0 2px 2px 0; transform: rotate(40deg); }
`;
const PropsFooter = styled.footer`display: flex; align-items: flex-start; justify-content: space-between; height: 25px; flex: none; padding: 2px 2px 0;`;
const HelpLink = styled.a`color: #0e62a8; text-decoration: underline; font-size: 12px; line-height: 20px;`;
const Apply = styled.button`width: 73px; height: 21px; border: 1px solid #b4b4b4; border-radius: 3px; background: #f4f4f4; color: #8a8a8a; font-size: 12px;`;

/* scroll bars */
const Bar = styled.div<{ $h?: boolean }>`
  display: flex; flex: none; flex-direction: ${(p) => (p.$h ? "row" : "column")}; background: #ececec;
  ${(p) => (p.$h ? "height: 16px;" : "width: 16px;")}
`;
const BarEnd = styled.button`flex: none; display: grid; place-items: center; width: 16px; height: 16px;`;
const Gap = styled.span<{ $n: number }>`flex: ${(p) => p.$n} 1 0;`;
const BarThumb = styled.span<{ $n: number; $h?: boolean }>`
  flex: ${(p) => p.$n} 1 0; display: grid; place-items: center; margin: ${(p) => (p.$h ? "1px 0" : "0 1px")};
  border: 1px solid #9a9a9a; border-radius: 2px; background: linear-gradient(${(p) => (p.$h ? 180 : 90)}deg, #f5f5f5, #e2e2e4 45%, #c6c6ca);
`;
const triangles = { up: "M4 1.500L7.500 6h-7z", down: "M.500 2h7L4 6.500z", left: "M2 4l4-3.500v7z", right: "M6 4L2 .500v7z" };
const Tri = ({ d }: { d: keyof typeof triangles }) => (<Icon w={8} h={8}><path d={triangles[d]} fill="#444" stroke="none" /></Icon>);
const ScrollBar = ({ h, sizes, grip = true }: { h?: boolean; sizes: [number, number, number]; grip?: boolean }) => (
  <Bar $h={h}>
    <BarEnd aria-label={h ? "Scroll left" : "Scroll up"}><Tri d={h ? "left" : "up"} /></BarEnd>
    <Gap $n={sizes[0]} />
    <BarThumb $n={sizes[1]} $h={h}>
      {grip && <Icon w={8} h={8} s="#666"><path d={h ? "M1.500 1v6M4.500 1v6M7.500 1v6" : "M1 1.500h6M1 4.500h6M1 7.500h6"} /></Icon>}
    </BarThumb>
    <Gap $n={sizes[2]} />
    <BarEnd aria-label={h ? "Scroll right" : "Scroll down"}><Tri d={h ? "right" : "down"} /></BarEnd>
  </Bar>
);

/* project browser tree */
const BrowserBody = styled(DockBody)`flex: 1;`;
const TreeArea = styled.div`display: flex; flex: 1; min-height: 0; background: #fff; border-bottom: 1px solid #ddd;`;
const Tree = styled.ul`flex: 1; min-width: 0; margin: 0; padding: 0; list-style: none; overflow: hidden;`;
const Row = styled.li`display: flex; height: 18px; font-size: 12px; line-height: 18px; white-space: nowrap;`;
const vLine = "repeating-linear-gradient(#999 0 1px, transparent 1px 2px)";
const Guide = styled.span<{ $line: boolean }>`
  width: 20px; flex: none; background: ${(p) => (p.$line ? vLine : "none")} 8px 0 / 1px 100% no-repeat;
`;
const Joint = styled.span<{ $last?: boolean }>`
  width: 23px; flex: none; display: flex; align-items: center; padding: 2px 0 0 4px;
  background: ${vLine} 8px 0 / 1px ${(p) => (p.$last ? "10px" : "100%")} no-repeat,
    repeating-linear-gradient(90deg, #999 0 1px, transparent 1px 2px) 9px 10px / 14px 1px no-repeat;
`;
const Expander = styled.button<{ $open?: boolean }>`
  width: 9px; height: 9px; border: 1px solid #919191; border-radius: 1px;
  background: linear-gradient(#3c4f95, #3c4f95) center / 5px 1px no-repeat,
    ${(p) => (p.$open ? "" : "linear-gradient(#3c4f95, #3c4f95) center / 1px 5px no-repeat,")} #f4f4f4;
`;
const Label = styled.span<{ $sel?: boolean }>`padding: 0 3px; background: ${(p) => (p.$sel ? "#e0e0e0" : "transparent")};`;

type Node = { t: string; g: boolean[]; open?: boolean; leaf?: boolean; last?: boolean; sel?: boolean };
const A = [true];
const nodes: Node[] = [
  { t: "Detail Items", g: A }, { t: "Duct Fittings", g: A }, { t: "Duct Insulations", g: A }, { t: "Duct Linings", g: A },
  { t: "Duct Systems", g: A, open: true },
  { t: "Duct System", g: [true, true], open: true, last: true },
  { t: "Obradeni uzduh", g: [true, true, false], leaf: true }, { t: "Otpadni uzduh", g: [true, true, false], leaf: true },
  { t: "Povratni uzduh", g: [true, true, false], leaf: true }, { t: "Svjezi uzduh", g: [true, true, false], leaf: true, last: true },
  { t: "Ducts", g: A, open: true },
  { t: "Oval Duct", g: [true, true] }, { t: "Rectangular Duct", g: [true, true], open: true },
  { t: "Pocincani celicni lim", g: [true, true, true], leaf: true, last: true, sel: true },
  { t: "Round Duct", g: [true, true], last: true },
  { t: "Flex Ducts", g: A }, { t: "Flex Pipes", g: A }, { t: "Floors", g: A }, { t: "Pattern", g: A },
  { t: "Pipe Accessories", g: A }, { t: "Pipe Fittings", g: A }, { t: "Pipe Insulations", g: A },
];

/* drawing area */
const View = styled.section`display: grid; grid-template-rows: 1fr 18px; min-width: 0; min-height: 0; border-left: 2px solid #6e6e6e; margin-bottom: 1px;`;
const CanvasRow = styled.div`display: flex; min-height: 0;`;
const Canvas = styled.div`
  position: relative; flex: 1; min-width: 0; overflow: hidden; background: #fff;
  > svg { position: absolute; left: 0; top: 0; }
`;
const CanvasTip = styled.div`
  position: absolute; left: 568px; top: 336px; width: 32px; height: 20px; border: 1px solid #666; border-radius: 2px; text-align: center; line-height: 18px; font-size: 12px; color: #555;
  background: linear-gradient(#fff, #e2e4ee); box-shadow: 2px 2px 2px rgba(0, 0, 0, 0.55);
`;
const ChildButtons = styled.div`position: absolute; right: 4px; top: 9px; display: flex; gap: 6px; align-items: center;`;
const NavBar = styled.div`
  position: absolute; right: 0; top: 29px; width: 36px; height: 118px; display: flex; flex-direction: column; align-items: center; justify-content: space-between; padding: 2px 0;
  border: 2px solid #c6c6c6; border-radius: 6px; background: #f5f5f5;
  > :first-child, > :last-child { align-self: flex-end; margin-right: 3px; }
  > hr { width: 26px; margin: 0; border: 0; border-top: 1px solid #c6c6c6; }
`;
const Bare = styled.button`display: flex; align-items: center; justify-content: center;`;
const Wheel = styled(Bare)`
  margin-top: 6px;
  > span { align-self: flex-end; margin-left: -11px; font-size: 10px; font-weight: 700; line-height: 8px; color: #7a9fc9; }
`;
const ViewBar = styled.div`display: flex; align-items: center; background: #f0f0f0;`;
const ViewTools = styled.div`display: flex; align-items: center; width: 265px; padding-left: 23px;`;
const Scale = styled.button`width: 52px; text-align: left; font-size: 12px;`;
const ViewTool = styled.button`display: flex; align-items: center; justify-content: center; width: 21px; height: 16px;`;
const HBarWrap = styled.div`flex: 1; > div { width: 100%; }`;
const Grip = styled.span`display: grid; place-items: center; width: 16px; height: 16px;`;

const StatusBar = styled.footer`
  position: relative; display: flex; flex: none; align-items: center; height: 23px; padding: 0 57px 0 3px; border-top: 1px solid #8c8c8c; background: linear-gradient(#d6d6d6, #e2e2e2 30%, #c4c4c4); font-size: 12px;
`;
const StatusText = styled.span`flex: 1; font-size: 11px;`;
const StatusGroup = styled.div`display: flex; align-items: center; gap: 2px; width: 500px; margin-right: 219px;`;
const StatusButton = styled.button<{ $wide?: boolean }>`
  display: flex; align-items: center; justify-content: ${(p) => (p.$wide ? "flex-start" : "center")}; gap: 5px;
  width: ${(p) => (p.$wide ? 54 : 26)}px; padding-left: ${(p) => (p.$wide ? 4 : 0)}px; height: 22px; background: #d9d9d9; border: 1px solid #cfcfcf; font-size: 12px;
`;
const Picks = styled.div`display: flex; align-items: center;`;
const FilterCount = styled.button`display: flex; align-items: flex-end; padding-left: 1px; font-size: 12px; line-height: 14px;`;
const Orb = styled.span`position: absolute; left: 15px; bottom: 0; overflow: hidden; height: 4px;`;

const Sizing = ({ x, y }: { x: number; y: number }) => (
  <g transform={`translate(${x} ${y})`}>
    <rect x="-6.500" y="-6.500" width="13" height="13" fill="#f4faff" stroke="#0a4a9c" />
    <circle r="3.500" fill="#0a3fae" stroke="none" /><path d="M-6 0H6M0-6V6" stroke="#0a3fae" strokeWidth="2" />
  </g>
);
const CrossBox = ({ x, y }: { x: number; y: number }) => (
  <g transform={`translate(${x} ${y})`} stroke="#77755a"><rect x="-6.500" y="-6.500" width="13" height="13" fill="#f4f3ea" /><path d="M-6-6L6 6M6-6L-6 6" /></g>
);
const Drawing = () => (
  <svg width="100%" height="100%" fill="none" aria-label="Floor plan">
    <g transform="translate(-227 -167)">
      <path d="M929 432.500H1678.500V534.500H929" stroke="#1b1464" />
      <path d="M811.500 551V1100M913.500 551V1100" stroke="#1b1464" />
      <path d="M811.500 551V444.500Q815 433 826.500 432.500H929.500V534.500C919 536 914 542 913.500 551z" fill="#4a74cf" stroke="#0d3c8c" />
      <path d="M929.500 429V537" stroke="#0d3c8c" />
      <path d="M808 551H917" stroke="#0a3fbe" strokeWidth="2" />
      <path d="M936 483.500H988M862.500 557V609" stroke="#5c50a8" />
      <path d="M857 416H867M862 411V421" stroke="#123f7c" strokeWidth="2" />
      <path d="M790 484H800M795 479V489" stroke="#6a3a80" strokeWidth="2" />
      <path d="M806 474C801 470 784 468 780 474C777 481 780 487 785 491C791 495 801 494 807 491C811 487 810 476 804 472" stroke="#dc2430" strokeWidth="3" strokeLinecap="round" />
      <Sizing x={930} y={483} /><Sizing x={862} y={551} />
      <CrossBox x={999} y={484} /><CrossBox x={862} y={621} />
      <g fill="#1c4a8c" fontFamily="'Liberation Sans', Arial, sans-serif" fontSize="11">
        <text x="968" y="504">650.0 x 300.0</text><text x="831" y="641">650.0 x 300.0</text>
      </g>
    </g>
  </svg>
);

/* ---------- property data ---------- */

type Prop = { group?: string; name?: string; value?: string; muted?: boolean; kind?: "input" | "check" | "button" };
const props: Prop[] = [
  { group: "Constraints" },
  { name: "Level", value: "Level 0", kind: "input" }, { name: "Host", value: "Level : Level 0", muted: true }, { name: "Offset", value: "2750.0" },
  { group: "Graphics" },
  { name: "Use Annotatio...", kind: "check" },
  { group: "Mechanical" },
  { name: "System Classifi...", value: "Supply Air", muted: true }, { name: "System Type", value: "Obradeni uz...", muted: true },
  { name: "System Name", value: "Mechanical ...", muted: true }, { name: "System Abbre...", value: "", muted: true },
  { name: "Loss Method", value: "Coefficient fr..." }, { name: "Loss Method S...", value: "Edit...", kind: "button" },
  { group: "Mechanical - Fl..." },
  { name: "Pressure Drop", value: "", muted: true },
  { group: "Dimensions" },
];

const Panel = ({ w, title, green, first, caret, children }: { w: number; title: string; green?: boolean; first?: boolean; caret?: boolean; children: React.ReactNode }) => (
  <PanelBox $w={w} $first={first}>
    <PanelBody>{children}</PanelBody>
    <PanelTitle $green={green}>{title}{caret && <BigCaret />}</PanelTitle>
  </PanelBox>
);

const Q = ({ label, icon, arrow, on }: { label: string; icon: React.ReactNode; arrow?: boolean; on?: boolean }) => (
  <>
    <QButton aria-label={label} $on={on}>{icon}</QButton>
    {arrow && <QButton $arrow aria-label={`${label} options`}><Caret /></QButton>}
  </>
);

const tabNames = ["Systems", "Architecture", "Insert", "Annotate", "Analyze", "Massing & Site", "Collaborate", "View", "Manage", "Add-Ins"];

export default function App() {
  return (
    <Shell>
      <Global />
      <Header>
        <AppMenu aria-label="Application menu"><span><LogoIcon /><Caret /></span>MEP</AppMenu>
        <TitleBar>
          <QuickBar>
            <Q label="Open" icon={<OpenIcon />} /><Q label="Save" icon={<SaveIcon />} /><Q label="Synchronize" icon={<SyncIcon />} arrow />
            <Q label="Undo" icon={<UndoIcon />} arrow /><Q label="Redo" icon={<UndoIcon muted />} arrow /><QSep />
            <Q label="Measure" icon={<RulerIcon />} arrow /><Q label="Aligned dimension" icon={<DimIcon />} /><Q label="Tag" icon={<TagIcon />} />
            <QButton>A</QButton><QSep />
            <Q label="3D view" icon={<HouseIcon />} arrow /><Q label="Section" icon={<SectionIcon />} /><Q label="Thin lines" icon={<ThinLinesIcon />} on /><QSep />
            <Q label="Close hidden windows" icon={<CloseHiddenIcon />} /><Q label="Switch windows" icon={<SwitchIcon />} arrow />
            <QButton $arrow aria-label="Customize"><CustomizeIcon /></QButton>
          </QuickBar>
          <WindowTitle><span>Autodesk Revit MEP 2014 -</span><span>TERINGPRO Template - Floor Plan: 0 - Mech</span></WindowTitle>
          <InfoCenter>
            <QButton $arrow aria-label="Collapse search"><Tri d="right" /></QButton>
            <Search placeholder="Type a keyword or phrase" aria-label="Search" />
            <Q label="Search" icon={<BinocularsIcon />} /><Q label="Subscription" icon={<KeyIcon />} /><Q label="Communication" icon={<DishIcon />} /><Q label="Favorites" icon={<StarIcon />} />
            <SignIn><PersonIcon />Sign In<Caret /></SignIn>
            <Q label="Exchange" icon={<ExchangeIcon />} /><QSep />
            <Q label="Help" icon={<HelpIcon />} arrow />
          </InfoCenter>
          <WinButtons>
            <WinButton aria-label="Minimize"><Icon w={12} h={6}><path d="M.500 1.500h11v3H.500z" fill="#fff" /></Icon></WinButton>
            <WinButton aria-label="Restore"><Icon w={12} h={12}><path d="M3.500.500h8v8h-2M.500 3.500h8v8h-8zM3 6h3v3H3z" fill="#fff" /></Icon></WinButton>
            <WinButton $close aria-label="Close"><Icon w={12} h={10}><path d="M1 .500h3l2 2.500 2-2.500h3L7.800 5 11 9.500H8L6 7 4 9.500H1L4.200 5z" fill="#fff" stroke="#6a4040" /></Icon></WinButton>
          </WinButtons>
        </TitleBar>
        <Tabs>
          {tabNames.map((t) => <Tab key={t}>{t}</Tab>)}
          <Tab $kind="active">Modify | Duct Fittings</Tab>
          <Tab $kind="context">Duct Systems</Tab>
          <Minimize aria-label="Minimize ribbon">
            <Icon w={15} h={9}><rect x=".5" y=".5" width="14" height="8" rx="2" fill="#fff" /><path d="M7.500 2.500L10 6H5z" fill="#222" stroke="none" /></Icon>
            <Caret c="#000" />
          </Minimize>
        </Tabs>
      </Header>

      <Ribbon>
        <Panel w={56} title="Select" caret><ModifyTool $w={44}><CursorIcon />Modify</ModifyTool></Panel>
        <Panel w={64} title="Properties">
          <IconGrid $cols={1} $cw={40} $rows={2}><Cell aria-label="Type properties"><CubesGroup /></Cell><Cell $on aria-label="Properties"><SheetIcon /></Cell></IconGrid>
        </Panel>
        <Panel w={80} title="Clipboard">
          <Tool $w={50} $muted><PasteIcon />Paste<Caret c="#999" /></Tool>
          <IconGrid $cols={1} $cw={25}><Cell aria-label="Cut to clipboard"><ScissorsIcon /></Cell><Cell aria-label="Copy to clipboard"><CopyIcon /></Cell><Cell aria-label="Match type"><MatchIcon /></Cell></IconGrid>
        </Panel>
        <Panel w={132} title="Geometry">
          <TextTools><TextTool><CutIcon />Cut<Caret /></TextTool><TextTool><JoinIcon />Join<Caret /></TextTool></TextTools>
          <IconGrid $cols={2} $cw={25}>
            <Cell aria-label="Cope"><CopeIcon /></Cell><Cell aria-label="Wall joins"><WallJoinIcon /></Cell>
            <Cell aria-label="Split face"><SplitFaceIcon /></Cell><Cell aria-label="Paint"><DemolishPaintIcon /></Cell>
            <Cell aria-label="Beam joins"><BeamIcon /></Cell><Cell aria-label="Demolish"><HammerIcon /></Cell>
          </IconGrid>
          <Cell aria-label="Paint options"><Caret /></Cell>
        </Panel>
        <Panel w={238} title="Modify">
          <IconGrid $cols={4} $cw={39} $rows={2}>
            <Cell aria-label="Align"><AlignIcon /></Cell><Cell aria-label="Offset"><OffsetIcon /></Cell><Cell aria-label="Mirror, pick axis"><MirrorIcon /></Cell><Cell aria-label="Mirror, draw axis"><MirrorIcon pencil /></Cell>
            <Cell aria-label="Move"><MoveIcon /></Cell><Cell aria-label="Copy"><CopyBigIcon /></Cell><Cell aria-label="Rotate"><RotateIcon /></Cell><Cell aria-label="Trim to corner"><TrimIcon /></Cell>
          </IconGrid>
          <IconGrid $cols={3} $cw={25}>
            <Cell aria-label="Split"><SplitIcon /></Cell><Cell aria-label="Split with gap"><SplitIcon gap /></Cell><Cell aria-label="Unpin"><UnpinIcon muted /></Cell>
            <Cell aria-label="Array"><ArrayIcon /></Cell><Cell aria-label="Scale"><ScaleIcon /></Cell><Cell aria-label="Pin"><UnpinIcon /></Cell>
            <Cell aria-label="Extend"><ExtendIcon /></Cell><Cell aria-label="Extend multiple"><ExtendIcon multi /></Cell><Cell aria-label="Delete"><DeleteIcon /></Cell>
          </IconGrid>
        </Panel>
        <Panel w={65} title="View">
          <IconGrid $cols={2} $cw={31}>
            <Cell aria-label="Hide"><BulbIcon /><Caret /></Cell><Cell aria-label="Displace"><RevealIcon /></Cell>
            <Cell aria-label="Override"><BrushIcon /><Caret /></Cell><Cell aria-label="Linework"><LineworkIcon /></Cell>
          </IconGrid>
        </Panel>
        <Panel w={56} title="Measure">
          <IconGrid $cols={1} $cw={48} $rows={2}><Cell aria-label="Measure between"><RulerIcon w={30} /><Caret /></Cell><Cell aria-label="Dimension"><DiagonalIcon /><Caret /></Cell></IconGrid>
        </Panel>
        <Panel w={82} title="Create">
          <IconGrid $cols={2} $cw={38} $rows={2}>
            <Cell aria-label="Assembly"><AssemblyIcon /></Cell><Cell aria-label="Create similar"><AssemblyIcon star /></Cell>
            <Cell aria-label="Parts"><PartsIcon /></Cell><Cell aria-label="Group"><GroupIcon /></Cell>
          </IconGrid>
        </Panel>
        <Panel w={46} title="Mode" green first><Tool $w={44}><FamilyIcon />Edit<br />Family</Tool></Panel>
        <Panel w={44} title="Edit" green><Tool $w={42}><JustifyIcon />Justify</Tool></Panel>
        <Panel w={179} title="Duct Insulation" green>
          <Tool><DuctIcon mark="add" />Add<br />Insulation</Tool><Tool $muted><DuctIcon mark="edit" />Edit<br />Insulation</Tool><Tool $muted><DuctIcon mark="remove" />Remove<br />Insulation</Tool>
        </Panel>
        <Panel w={132} title="Duct Lining" green>
          <Tool $w={40}><DuctIcon mark="add" lining />Add<br />Lining</Tool><Tool $muted $w={40}><DuctIcon mark="edit" />Edit<br />Lining</Tool><Tool $muted $w={50}><DuctIcon mark="remove" />Remove<br />Lining</Tool>
        </Panel>
        <Panel w={82} title="Warning" green><Tool $w={80}><WarningIcon />Show Related<br />Warnings</Tool></Panel>
      </Ribbon>

      <OptionsBar onSubmit={(e) => e.preventDefault()}>
        <ContextName>Modify | Duct Fittings</ContextName>
        <Rule />
        <Field>Width:<SelectFrame $w={88}><PlainSelect><option>650</option></PlainSelect><BigCaret /></SelectFrame></Field>
        <Field>Height:<SelectFrame $w={88}><PlainSelect><option>300</option></PlainSelect><BigCaret /></SelectFrame></Field>
        <Rule />
        <Field>Offset:<SelectFrame $w={96}><OffsetInput defaultValue="2750.0 mm" /><BigCaret /></SelectFrame></Field>
      </OptionsBar>

      <Work>
        <Dock>
          <DockHeader><h2>Properties</h2><Bare aria-label="Close properties"><CrossIcon /></Bare></DockHeader>
          <PropsBody>
            <TypeSelector><Thumb><ElbowThumb /></Thumb><span>TeringPro - Kanali -<br />Koljeno (prirubnica) - P<br />Standard</span><Caret /></TypeSelector>
            <InstanceRow>
              <SelectFrame $w={133} $h={23} $look="raised"><PlainSelect aria-label="Instance filter"><option>Duct Fittings (1)</option></PlainSelect><BigCaret /></SelectFrame>
              <EditType><CubesGroup k={0.600} />Edit Type</EditType>
            </InstanceRow>
            <GridArea>
              <GridClip>
                <PropTable>
                  <colgroup><col width="50%" /><col width="50%" /></colgroup>
                  <tbody>
                    {props.map((p) =>
                      p.group ? (
                        <tr key={p.group}><GroupCell colSpan={2}><div>{p.group}<Bare aria-label={`Collapse ${p.group}`}><ChevronsIcon /></Bare></div></GroupCell></tr>
                      ) : (
                        <tr key={p.name}>
                          <NameCell scope="row" $muted={p.muted}>{p.name}</NameCell>
                          <ValueCell $muted={p.muted}>
                            {p.kind === "input" && <LevelInput type="text" aria-label={p.name} defaultValue={p.value} />}
                            {p.kind === "check" && <Check type="checkbox" aria-label={p.name} defaultChecked />}
                            {p.kind === "button" && <EditButton>{p.value}</EditButton>}
                            {!p.kind && p.value}
                          </ValueCell>
                        </tr>
                      )
                    )}
                  </tbody>
                </PropTable>
              </GridClip>
              <ScrollBar sizes={[0, 101, 149]} />
            </GridArea>
            <PropsFooter><HelpLink href="#help">Properties help</HelpLink><Apply disabled>Apply</Apply></PropsFooter>
          </PropsBody>
          <DockHeader><h2>Project Browser - TERINGPRO Templ...</h2><Bare aria-label="Close browser"><CrossIcon /></Bare></DockHeader>
          <BrowserBody>
            <TreeArea>
              <Tree>
                {nodes.map((n) => (
                  <Row key={n.t}>
                    {n.g.map((line, i) => <Guide key={i} $line={line} />)}
                    <Joint $last={n.last}>{!n.leaf && <Expander $open={n.open} aria-label={`Toggle ${n.t}`} />}</Joint>
                    <Label $sel={n.sel}>{n.t}</Label>
                  </Row>
                ))}
              </Tree>
              <ScrollBar sizes={[150, 126, 79]} />
            </TreeArea>
            <ScrollBar h sizes={[0, 132, 46]} />
          </BrowserBody>
        </Dock>

        <View>
          <CanvasRow>
            <Canvas>
              <Drawing />
              <CanvasTip>Tee</CanvasTip>
              <ChildButtons>
                <Bare aria-label="Minimize view"><Icon w={13} h={12}><path d="M.500 7.500h11v3H.500z" fill="#fff" /></Icon></Bare>
                <Bare aria-label="Restore view"><Icon w={12} h={12}><path d="M3.500.500h8v8h-3M.500 3.500h8v8h-8zM3.500 6h2v2.500h-2z" fill="#fff" strokeWidth="1.200" /></Icon></Bare>
                <Bare aria-label="Close view"><Icon w={12} h={11}><path d="M1 .500h3l2 2.500 2-2.500h3L7.800 5.500 11 10.500H8L6 8l-2 2.500H1l3.200-5z" fill="#fff" /></Icon></Bare>
              </ChildButtons>
              <NavBar>
                <Bare aria-label="Close navigation bar"><Icon w={8} h={8} s="#fff"><circle cx="4" cy="4" r="4" fill="#b0b0b0" stroke="none" /><path d="M2 2l4 4M6 2L2 6" /></Icon></Bare>
                <Wheel aria-label="Steering wheel"><Icon w={22} h={22} s="#aaa"><path d="M11 2h8.500v9a8.500 8.500 0 11-8.500-9z" fill="#f0f0f0" strokeWidth="1.300" /><circle cx="10.500" cy="10.500" r="4.500" fill="#fff" /></Icon><span>2D</span></Wheel>
                <Caret c="#999" /><hr />
                <Bare aria-label="Zoom region"><Icon w={18} h={18} s="#9a9a9a"><path d="M1.500 1.500h11v11h-11z" fill="#b2d69e" stroke="#86b070" /><circle cx="11" cy="11" r="3.500" fill="#fff" /><path d="M13.500 13.500l3.500 3.500" strokeWidth="2" /></Icon></Bare>
                <Caret c="#999" />
                <Bare aria-label="Customize navigation bar"><Icon w={8} h={8} s="#fff"><circle cx="4" cy="4" r="4" fill="#b0b0b0" stroke="none" /><path d="M2 4h4" /></Icon></Bare>
              </NavBar>
            </Canvas>
            <ScrollBar sizes={[397, 15, 395]} grip={false} />
          </CanvasRow>
          <ViewBar>
            <ViewTools>
              <Scale>1 : 100</Scale>
              <ViewTool aria-label="Detail level"><DetailIcon /></ViewTool><ViewTool aria-label="Visual style"><StyleIcon /></ViewTool><ViewTool aria-label="Sun path"><SunIcon /></ViewTool>
              <ViewTool aria-label="Shadows"><ShadowIcon /></ViewTool><ViewTool aria-label="Crop view"><CropIcon /></ViewTool><ViewTool aria-label="Show crop region"><CropIcon bulb /></ViewTool>
              <ViewTool aria-label="Temporary hide"><GlassesIcon /></ViewTool><ViewTool aria-label="Reveal hidden"><SmallBulbIcon /></ViewTool><ViewTool aria-label="Reveal constraints"><ConstraintsIcon /></ViewTool>
            </ViewTools>
            <HBarWrap><ScrollBar h sizes={[681, 15, 679]} grip={false} /></HBarWrap>
            <Grip><Icon w={9} h={9} s="#a8a8a8"><path d="M7 1h2M4 4.500h2M7 4.500h2M1 8h2M4 8h2M7 8h2" strokeWidth="2" /></Icon></Grip>
          </ViewBar>
        </View>
      </Work>

      <StatusBar>
        <StatusText>Tee</StatusText>
        <StatusGroup>
          <StatusButton aria-label="Worksets"><PeopleIcon /></StatusButton>
          <SelectFrame $w={206} $h={22} $look="status"><PlainSelect disabled aria-label="Active workset"><option></option></PlainSelect><Caret c="#999" /></SelectFrame>
          <StatusButton $wide aria-label="Editing requests"><RequestIcon />:0</StatusButton>
          <StatusButton aria-label="Design options"><OptionsIcon /></StatusButton>
          <StatusButton aria-label="Add to set"><AddSetIcon /></StatusButton>
          <SelectFrame $w={157} $h={22} $look="status"><PlainSelect disabled aria-label="Active design option"><option>Main Model</option></PlainSelect><Caret c="#999" /></SelectFrame>
        </StatusGroup>
        <Picks>
          {(["link", "underlay", "pin", "face", "drag"] as const).map((k) => <StatusButton key={k} aria-label={`Select ${k}`}><PickIcon kind={k} /></StatusButton>)}
          <FilterCount><FunnelIcon />:1</FilterCount>
        </Picks>
        <Orb><Icon w={24} h={24}><circle cx="12" cy="12" r="11" fill="#a9c6dd" stroke="#2f6f9f" strokeWidth="2" /></Icon></Orb>
      </StatusBar>
    </Shell>
  );
}
